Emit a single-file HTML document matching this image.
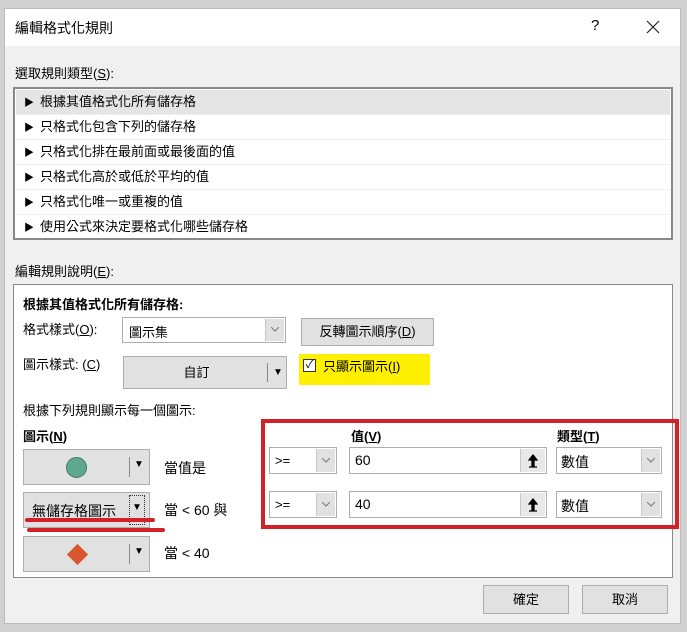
<!DOCTYPE html>
<html><head><meta charset="utf-8"><style>
*{box-sizing:border-box;margin:0;padding:0}
body{width:687px;height:632px;background:#d0d0d0;position:relative;overflow:hidden;font-family:"Liberation Sans","Noto Sans CJK TC",sans-serif;font-size:13px;color:#000}
.a{position:absolute;white-space:nowrap}
.dlg{position:absolute;left:4px;top:8px;width:677px;height:616px;background:#f0f0f0;border:1px solid #bbb}
.title{position:absolute;left:0;top:0;width:100%;height:37px;background:#fff}
.box{position:absolute;background:#fff;border:1px solid #888}
.btn{position:absolute;background:#e1e1e1;border:1px solid #adadad;text-align:center}
.combo{position:absolute;background:#fff;border:1px solid #adadad}
.dd{position:absolute;right:1px;top:1px;bottom:1px;width:19px;background:#e1e1e1;border-left:1px solid #c8c8c8;text-align:center}
.dd svg{position:absolute;left:5px;top:50%;margin-top:-3px}
.row{position:absolute;left:1px;right:1px;height:25px;border-bottom:1px solid #eee;padding-left:8px;line-height:24px}
.row i{font-style:normal;font-size:10px;margin-right:6px}
u{text-decoration:underline}
</style></head><body>
<div class="dlg">
<div class="title"><span class="a" style="left:10px;top:9px;font-size:14px">編輯格式化規則</span><span class="a" style="left:586px;top:8px;font-size:15px">?</span>
<svg class="a" style="left:641px;top:11px" width="14" height="14"><path d="M1 1L13 13M13 1L1 13" stroke="#222" stroke-width="1.2"/></svg></div>
<span class="a" style="left:10px;top:54px">選取規則類型(<u>S</u>):</span>
<div class="box" style="left:8px;top:78px;width:660px;height:153px;border:2px solid #888;overflow:hidden">
<div class="row" style="top:1px;background:#e5e5e5"><i>▶</i>根據其值格式化所有儲存格</div>
<div class="row" style="top:26px"><i>▶</i>只格式化包含下列的儲存格</div>
<div class="row" style="top:51px"><i>▶</i>只格式化排在最前面或最後面的值</div>
<div class="row" style="top:76px"><i>▶</i>只格式化高於或低於平均的值</div>
<div class="row" style="top:101px"><i>▶</i>只格式化唯一或重複的值</div>
<div class="row" style="top:126px"><i>▶</i>使用公式來決定要格式化哪些儲存格</div>
</div>
<span class="a" style="left:10px;top:252px">編輯規則說明(<u>E</u>):</span>
<div class="box" style="left:8px;top:275px;width:660px;height:294px"></div>
<span class="a" style="left:18px;top:285px;font-weight:bold">根據其值格式化所有儲存格:</span>
<span class="a" style="left:18px;top:310px">格式樣式(<u>O</u>):</span>
<div class="combo" style="left:117px;top:308px;width:164px;height:26px"><span class="a" style="left:6px;top:4px">圖示集</span><div class="dd"><svg width="8" height="5"><path d="M0 0L4 4L8 0" stroke="#777" fill="none"/></svg></div></div>
<div class="btn" style="left:296px;top:309px;width:133px;height:28px;line-height:26px">反轉圖示順序(<u>D</u>)</div>
<span class="a" style="left:18px;top:345px">圖示樣式: (<u>C</u>)</span>
<div class="btn" style="left:118px;top:347px;width:164px;height:33px;line-height:31px"><span style="position:absolute;left:0;width:145px;text-align:center">自訂</span><span style="position:absolute;left:143px;top:6px;height:19px;border-left:1px solid #888"></span><span style="position:absolute;left:149px;font-size:10px">▼</span></div>
<div class="a" style="left:294px;top:345px;width:131px;height:31px;background:#fff000"></div>
<div class="a" style="left:298px;top:350px;width:13px;height:13px;border:1px solid #333;background:#fff;font-size:11px;line-height:11px;text-align:center">✓</div>
<span class="a" style="left:318px;top:347px">只顯示圖示(<u>I</u>)</span>
<span class="a" style="left:18px;top:391px">根據下列規則顯示每一個圖示:</span>
<span class="a" style="left:18px;top:417px;font-weight:bold">圖示(<u>N</u>)</span>
<div class="btn" style="left:18px;top:440px;width:127px;height:36px"><span style="position:absolute;left:42px;top:7px;width:21px;height:21px;border-radius:50%;background:#5fa88f;border:1px solid #3f7d68"></span><span style="position:absolute;left:105px;top:7px;height:20px;border-left:1px solid #888"></span><span style="position:absolute;left:110px;top:9px;font-size:10px">▼</span></div>
<div class="btn" style="left:18px;top:483px;width:127px;height:36px"><span style="position:absolute;left:8px;top:8px;font-size:14px">無儲存格圖示</span><span style="position:absolute;left:105px;top:2px;width:16px;height:30px;border:1px dotted #333"></span><span style="position:absolute;left:108px;top:9px;font-size:10px">▼</span></div>
<div class="btn" style="left:18px;top:527px;width:127px;height:36px"><span style="position:absolute;left:46px;top:10px;width:15px;height:15px;background:#d9562f;transform:rotate(45deg)"></span><span style="position:absolute;left:105px;top:7px;height:20px;border-left:1px solid #888"></span><span style="position:absolute;left:110px;top:9px;font-size:10px">▼</span></div>
<span class="a" style="left:159px;top:449px;font-size:14px">當值是</span>
<span class="a" style="left:159px;top:491px;font-size:14px">當 &lt; 60 與</span>
<span class="a" style="left:159px;top:534px;font-size:14px">當 &lt; 40</span>
<div class="a" style="left:20px;top:509px;width:130px;height:4px;background:#d42027;border-radius:2px"></div>
<div class="a" style="left:22px;top:519px;width:138px;height:4px;background:#d42027;border-radius:2px"></div>
<div class="a" style="left:256px;top:410px;width:418px;height:110px;border:4px solid #d42027;background:transparent"></div>
<span class="a" style="left:346px;top:417px;font-weight:bold">值(<u>V</u>)</span>
<span class="a" style="left:552px;top:417px;font-weight:bold">類型(<u>T</u>)</span>
<div class="combo" style="left:264px;top:438px;width:68px;height:27px"><span class="a" style="left:5px;top:5px">&gt;=</span><div class="dd"><svg width="8" height="5"><path d="M0 0L4 4L8 0" stroke="#777" fill="none"/></svg></div></div>
<div class="combo" style="left:344px;top:438px;width:198px;height:27px"><span class="a" style="left:5px;top:4px;font-size:14px">60</span><div class="dd" style="width:25px;background:#e8e8e8"><svg style="left:7px;margin-top:-7px" width="10" height="14"><path d="M5 1L1 6H4V12H6V6H9Z M1 13H9" stroke="#000" stroke-width="1.3" fill="#000"/></svg></div></div>
<div class="combo" style="left:551px;top:438px;width:106px;height:27px"><span class="a" style="left:4px;top:4px;font-size:14px">數值</span><div class="dd"><svg width="8" height="5"><path d="M0 0L4 4L8 0" stroke="#777" fill="none"/></svg></div></div>
<div class="combo" style="left:264px;top:482px;width:68px;height:27px"><span class="a" style="left:5px;top:5px">&gt;=</span><div class="dd"><svg width="8" height="5"><path d="M0 0L4 4L8 0" stroke="#777" fill="none"/></svg></div></div>
<div class="combo" style="left:344px;top:482px;width:198px;height:27px"><span class="a" style="left:5px;top:4px;font-size:14px">40</span><div class="dd" style="width:25px;background:#e8e8e8"><svg style="left:7px;margin-top:-7px" width="10" height="14"><path d="M5 1L1 6H4V12H6V6H9Z M1 13H9" stroke="#000" stroke-width="1.3" fill="#000"/></svg></div></div>
<div class="combo" style="left:551px;top:482px;width:106px;height:27px"><span class="a" style="left:4px;top:4px;font-size:14px">數值</span><div class="dd"><svg width="8" height="5"><path d="M0 0L4 4L8 0" stroke="#777" fill="none"/></svg></div></div>
<div class="btn" style="left:478px;top:576px;width:86px;height:29px;line-height:27px">確定</div>
<div class="btn" style="left:577px;top:576px;width:86px;height:29px;line-height:27px">取消</div>
</div>
</body></html>
